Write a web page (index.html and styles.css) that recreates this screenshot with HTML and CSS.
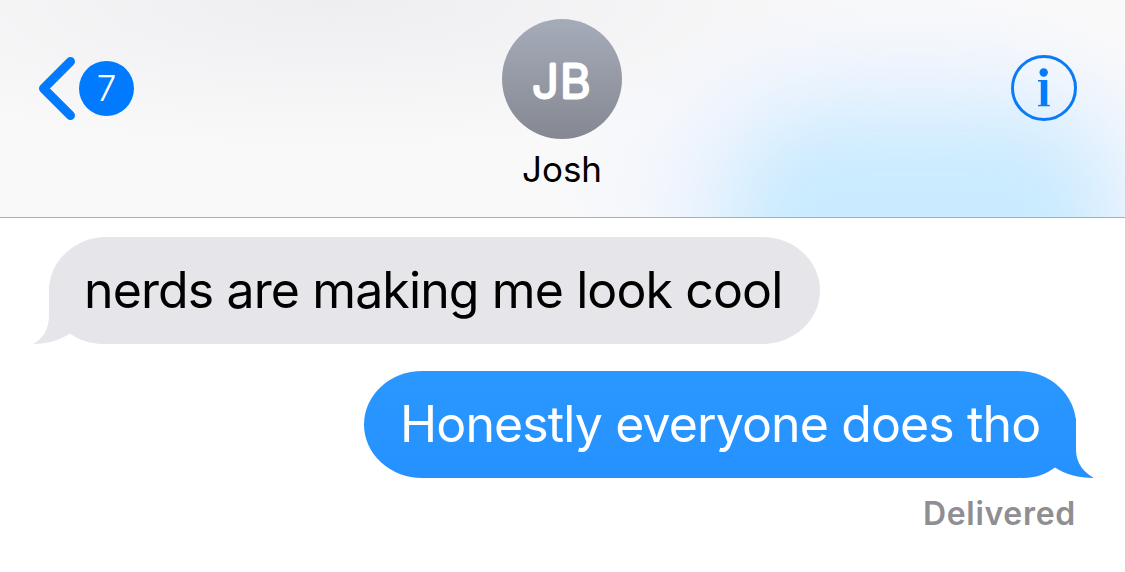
FILE: index.html
```html
<!DOCTYPE html>
<html lang="en">
<head>
    <meta charset="UTF-8">
    <meta name="viewport" content="width=device-width, initial-scale=1.0">
    <title>Josh</title>
    <link rel="stylesheet" href="styles.css">
</head>
<body>
    <header class="header">
        <div class="back">
            <svg class="chevron" width="38" height="64" viewBox="0 0 38 64">
                <path d="M32.5 4.5 L5.5 31.5 L32.5 58.5" />
            </svg>
            <span class="unread">7</span>
        </div>

        <div class="contact">
            <svg class="avatar" width="120" height="120" viewBox="0 0 120 120">
                <defs>
                    <linearGradient id="avatarFill" x1="0" y1="0" x2="0" y2="1">
                        <stop offset="0" stop-color="#a5acb9" />
                        <stop offset="1" stop-color="#858892" />
                    </linearGradient>
                </defs>
                <circle cx="60" cy="60" r="60" fill="url(#avatarFill)" />
                <text class="initials" x="60" y="78.5">JB</text>
            </svg>
            <div class="name">Josh</div>
        </div>

        <svg class="info" width="66" height="66" viewBox="0 0 66 66">
            <circle class="ring" cx="33" cy="33" r="31.5" />
            <circle cx="32.7" cy="17.5" r="4.2" />
            <path d="M27 25 H36.3 V49.8 L38.9 50 V51.2 H27 V50 L29.8 49.8 V26.8 L27 26.4 Z" />
        </svg>
    </header>

    <main class="messages">
        <div class="bubble received">
            nerds are making me look cool
            <svg class="tail" width="72" height="60" viewBox="0 0 72 60">
                <path d="M16 0 V32 C16 46 9 55 0 60 C14 60 27 56 37 49.5 C46 56 58 60 72 60 V0 Z" />
            </svg>
        </div>
        <div class="bubble sent">
            Honestly everyone does tho
            <svg class="tail" width="72" height="60" viewBox="0 0 72 60">
                <defs>
                    <linearGradient id="sentFill" gradientUnits="userSpaceOnUse" x1="0" y1="-47" x2="0" y2="60">
                        <stop offset="0" stop-color="#2b98ff" />
                        <stop offset="1" stop-color="#2491ff" />
                    </linearGradient>
                </defs>
                <path d="M54 0 V32 C54 46 63 55 72 60 C56 60 43 56 33 49.5 C24 56 14 60 0 60 V0 Z" />
            </svg>
        </div>
        <div class="status">Delivered</div>
    </main>
</body>
</html>
```

FILE: styles.css
```css
body {
    margin: 0;
    background-color: #fff;
    font-family: Inter, 'Liberation Sans', sans-serif;
    color: #000;
}

.header {
    position: relative;
    isolation: isolate;
    overflow: hidden;
    display: grid;
    grid-template-columns: 1fr 120px 1fr;
    box-sizing: border-box;
    height: 218px;
    padding: 19px 48px 0 47px;
    border-bottom: 1px solid #adaeb2;
    background:
        radial-gradient(ellipse 340px 200px at 900px 190px, rgba(236, 244, 255, 0.9) 0%, rgba(238, 244, 255, 0.7) 60%, rgba(248, 249, 252, 0) 100%),
        radial-gradient(ellipse 560px 150px at 330px 0, #eeeef0 0%, rgba(241, 241, 243, 0.7) 50%, rgba(249, 249, 250, 0) 100%),
        #f9f9fa;
}

/* blue bubble showing through the frosted bar */
.header::before {
    content: '';
    position: absolute;
    z-index: -1;
    top: 116px;
    right: 15px;
    width: 380px;
    height: 260px;
    border-radius: 90px;
    background-color: #c9eaff;
    filter: blur(42px);
}

.back {
    display: flex;
    align-items: center;
    gap: 3px;
    height: 139px;
    margin-left: -9px;
}

.chevron path {
    fill: none;
    stroke: #007aff;
    stroke-width: 9;
    stroke-linecap: round;
    stroke-linejoin: round;
}

.unread {
    width: 55px;
    height: 55px;
    border-radius: 50%;
    background-color: #007aff;
    color: #fff;
    font-size: 35px;
    font-weight: 300;
    line-height: 55px;
    text-align: center;
}

.contact {
    display: flex;
    flex-direction: column;
    align-items: center;
}

.initials {
    fill: #fff;
    stroke: #fff;
    stroke-width: 3;
    stroke-linejoin: round;
    font-size: 47px;
    font-weight: 300;
    letter-spacing: 1.5px;
    text-anchor: middle;
}

.name {
    margin-top: 8px;
    font-size: 35px;
    line-height: 44px;
}

.info {
    justify-self: end;
    margin-top: 36px;
    fill: #057bfa;
}

.info .ring {
    fill: none;
    stroke: #0a7bf5;
    stroke-width: 3;
}

.messages {
    display: flex;
    flex-direction: column;
    padding: 19px 49px 0;
}

.bubble {
    position: relative;
    isolation: isolate;
    box-sizing: border-box;
    height: 107px;
    border-radius: 58px / 53.5px;
    font-size: 50px;
    line-height: 107px;
    letter-spacing: -0.88px;
    white-space: nowrap;
}

.received {
    align-self: flex-start;
    width: 771px;
    padding-left: 35px;
    background-color: #e5e5ea;
}

.sent {
    align-self: flex-end;
    width: 712px;
    margin-top: 27px;
    padding-left: 36px;
    background: linear-gradient(#2b98ff, #2491ff);
    color: #fff;
}

/* tail lies under the text, over the lower corner of its bubble */
.tail {
    position: absolute;
    z-index: -1;
    bottom: 0;
}

.received .tail {
    left: -16px;
    fill: #e5e5ea;
}

.sent .tail {
    right: -18px;
    fill: url(#sentFill);
}

.status {
    align-self: flex-end;
    margin-top: 15px;
    color: #8e8e93;
    font-size: 32px;
    font-weight: 600;
    line-height: 42px;
    letter-spacing: 0.7px;
}
```
